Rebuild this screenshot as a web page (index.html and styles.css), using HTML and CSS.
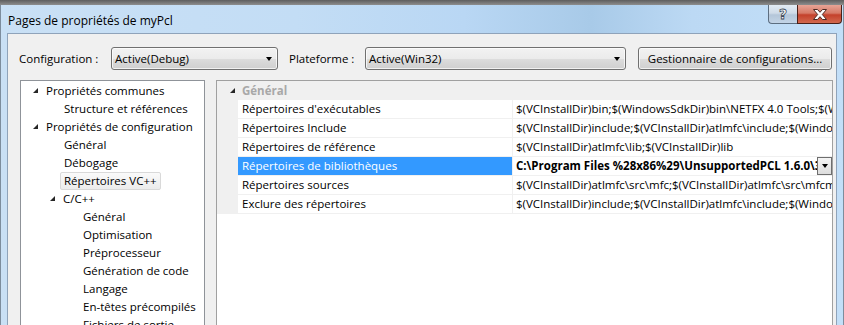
FILE: index.html
```html
<!DOCTYPE html>
<html lang="fr">
<head>
<meta charset="utf-8">
<title>Pages de propriétés de myPcl</title>
<link rel="stylesheet" href="styles.css">
</head>
<body>
<div class="window">
  <div class="topedge"></div>
  <div class="titlebar">
    <span class="title">Pages de propriétés de myPcl</span>
    <div class="caption-btns">
      <div class="cbtn help"><span class="q">?</span></div>
      <div class="cbtn close">
        <svg width="18" height="13" viewBox="0 0 18 13"><path d="M2.5 1.5 H6.5 L9 4.3 L11.5 1.5 H15.5 L11.3 6.5 L15.5 11.5 H11.5 L9 8.7 L6.5 11.5 H2.5 L6.7 6.5 Z" fill="#fff" stroke="#4b2a24" stroke-width="1" stroke-linejoin="round"/></svg>
      </div>
    </div>
  </div>
  <div class="client">
    <div class="toolbar">
      <span class="label lbl-config">Configuration :</span>
      <div class="combo combo-config"><span class="combo-text">Active(Debug)</span><span class="arrow"></span></div>
      <span class="label lbl-plat">Plateforme :</span>
      <div class="combo combo-plat"><span class="combo-text">Active(Win32)</span><span class="arrow"></span></div>
      <div class="button">Gestionnaire de configurations...</div>
    </div>
    <div class="panels">
      <div class="tree">
        <div class="node l0"><span class="tri"></span><span class="txt">Propriétés communes</span></div>
        <div class="node l1"><span class="txt">Structure et références</span></div>
        <div class="node l0"><span class="tri"></span><span class="txt">Propriétés de configuration</span></div>
        <div class="node l1"><span class="txt">Général</span></div>
        <div class="node l1"><span class="txt">Débogage</span></div>
        <div class="node l1 sel"><span class="txt">Répertoires VC++</span></div>
        <div class="node l1x"><span class="tri"></span><span class="txt">C/C++</span></div>
        <div class="node l2"><span class="txt">Général</span></div>
        <div class="node l2"><span class="txt">Optimisation</span></div>
        <div class="node l2"><span class="txt">Préprocesseur</span></div>
        <div class="node l2"><span class="txt">Génération de code</span></div>
        <div class="node l2"><span class="txt">Langage</span></div>
        <div class="node l2"><span class="txt">En-têtes précompilés</span></div>
        <div class="node l2"><span class="txt">Fichiers de sortie</span></div>
      </div>
      <div class="grid">
        <div class="cat"><span class="cat-tri"><span class="tri"></span></span><span class="cat-txt">Général</span></div>
        <div class="prow"><span class="margin"></span><span class="name">Répertoires d'exécutables</span><span class="value">$(VCInstallDir)bin;$(WindowsSdkDir)bin\NETFX 4.0 Tools;$(WindowsSdkDir)bin;$(VSInstallDir)Common7\Tools\bin</span></div>
        <div class="prow"><span class="margin"></span><span class="name">Répertoires Include</span><span class="value">$(VCInstallDir)include;$(VCInstallDir)atlmfc\include;$(WindowsSdkDir)include;$(FrameworkSDKDir)\include</span></div>
        <div class="prow"><span class="margin"></span><span class="name">Répertoires de référence</span><span class="value">$(VCInstallDir)atlmfc\lib;$(VCInstallDir)lib</span></div>
        <div class="prow selrow"><span class="margin"></span><span class="name">Répertoires de bibliothèques</span><span class="value"><span class="vtext">C:\Program Files %28x86%29\UnsupportedPCL 1.6.0\3rdParty\lib;$(LibraryPath)</span><span class="dd"><span class="ddarrow"></span></span></span></div>
        <div class="prow"><span class="margin"></span><span class="name">Répertoires sources</span><span class="value">$(VCInstallDir)atlmfc\src\mfc;$(VCInstallDir)atlmfc\src\mfcm;$(VCInstallDir)atlmfc\src\atl</span></div>
        <div class="prow"><span class="margin"></span><span class="name">Exclure des répertoires</span><span class="value">$(VCInstallDir)include;$(VCInstallDir)atlmfc\include;$(WindowsSdkDir)include;$(FrameworkSDKDir)\include</span></div>
      </div>
    </div>
  </div>
</div>
</body>
</html>
```
FILE: styles.css
```css
html, body {
  margin: 0;
  padding: 0;
}
body {
  width: 844px;
  height: 325px;
  overflow: hidden;
  font-family: "Open Sans", "Noto Sans", sans-serif;
  font-size: 11.5px;
  color: #000;
}
.window {
  width: 844px;
  height: 325px;
  overflow: hidden;
  display: flex;
  flex-direction: column;
  background: linear-gradient(90deg, #c9e0f5 0%, #c3ddf5 35%, #b9d7f4 55%, #a8cae8 70%, #bcd9f4 82%, #c3dff8 100%);
  box-shadow: inset 1px 0 0 #7d8d9d, inset -1px 0 0 #7d8d9d;
}
.topedge {
  height: 5px;
  flex: none;
  background: linear-gradient(180deg, #5e5e5e, #8d8d8d);
}
.titlebar {
  height: 28px;
  flex: none;
  display: flex;
  align-items: flex-start;
  padding-left: 8px;
}
.title {
  font-size: 12px;
  line-height: 16px;
  margin-top: 8px;
  color: #000;
}
.caption-btns {
  margin-left: auto;
  margin-right: 2px;
  display: flex;
  height: 19px;
}
.cbtn {
  height: 19px;
  box-sizing: border-box;
  display: flex;
  align-items: center;
  justify-content: center;
}
.help {
  width: 29px;
  border: 1px solid #5d6e80;
  border-top: none;
  border-right: none;
  border-radius: 0 0 0 4px;
  background: linear-gradient(180deg, #e2ebf4 0%, #cfdbe8 45%, #b4c6d9 55%, #c3d4e6 100%);
}
.q {
  font-family: "DejaVu Sans", sans-serif;
  font-weight: bold;
  font-size: 14px;
  line-height: 16px;
  color: #fff;
  -webkit-text-stroke: 0.8px #3e4a58;
}
.close {
  width: 45px;
  border: 1px solid #4a2019;
  border-top: none;
  border-radius: 0 0 4px 0;
  background: linear-gradient(180deg, #e7a496 0%, #d67a67 45%, #c4412b 55%, #d2694f 100%);
}
.client {
  flex: 1;
  margin: 0 7px 0 7px;
  border-top: 1px solid #8fa3ba;
  border-left: 1px solid #8fa3ba;
  border-right: 1px solid #8fa3ba;
  background: #f0f0f0;
  display: flex;
  flex-direction: column;
}
.toolbar {
  display: flex;
  align-items: center;
  height: 23px;
  margin-top: 13px;
  padding-left: 11px;
}
.label {
  flex: none;
  line-height: 23px;
}
.lbl-config { width: 92px; }
.lbl-plat { width: 76px; margin-left: 11px; }
.combo, .button {
  box-sizing: border-box;
  height: 23px;
  border: 1px solid #707070;
  border-radius: 3px;
  background: linear-gradient(180deg, #f2f2f2 0%, #ebebeb 50%, #dddddd 50%, #cfcfcf 100%);
  box-shadow: inset 0 0 0 1px rgba(255,255,255,0.7);
  display: flex;
  align-items: center;
  flex: none;
}
.combo-config { width: 167px; }
.combo-plat { width: 261px; }
.combo-text {
  padding-left: 3px;
  flex: 1;
}
.arrow {
  width: 0;
  height: 0;
  border-left: 3.5px solid transparent;
  border-right: 3.5px solid transparent;
  border-top: 4px solid #000;
  margin-right: 5px;
}
.button {
  width: 194px;
  margin-left: 12px;
  justify-content: center;
}
.panels {
  display: flex;
  margin-top: 10px;
  padding-left: 11px;
}
.tree {
  flex: none;
  box-sizing: border-box;
  width: 185px;
  height: 260px;
  margin-left: 1px;
  border: 1px solid #8f9399;
  background: #fff;
  padding-top: 1px;
}
.node {
  height: 18px;
  display: flex;
  align-items: center;
  white-space: nowrap;
}
.node .txt {
  line-height: 16px;
  padding: 0 3px;
  border: 1px solid transparent;
  border-radius: 2px;
}
.l0 { padding-left: 12px; }
.l1 { padding-left: 39px; }
.l1x { padding-left: 29px; }
.l2 { padding-left: 58px; }
.tri {
  display: inline-block;
  width: 0;
  height: 0;
  border-left: 5px solid transparent;
  border-bottom: 5px solid #262626;
  margin-right: 4px;
  margin-top: -1px;
}
.node.sel .txt {
  border-color: #d9d9d9;
  background: linear-gradient(180deg, #fafafa, #ececec);
}
.grid {
  flex: none;
  box-sizing: border-box;
  width: 617px;
  height: 260px;
  margin-left: 11px;
  border: 1px solid #a0a0a0;
  background: #fff;
}
.cat {
  height: 19px;
  background: #f0f0f0;
  display: flex;
  align-items: center;
}
.cat-tri {
  width: 21px;
  display: flex;
  justify-content: flex-end;
  padding-right: 3px;
  box-sizing: border-box;
}
.cat-tri .tri { margin: 0; }
.cat-txt {
  padding-left: 4px;
  font-weight: bold;
  color: #a8a8a8;
}
.prow {
  height: 18px;
  border-bottom: 1px solid #f0f0f0;
  display: flex;
  white-space: nowrap;
}
.margin {
  width: 21px;
  flex: none;
  background: #f0f0f0;
}
.name {
  width: 275px;
  flex: none;
  box-sizing: border-box;
  padding-left: 4px;
  line-height: 18px;
  border-right: 1px solid #f0f0f0;
  overflow: hidden;
}
.value {
  flex: 1;
  min-width: 0;
  padding-left: 3px;
  line-height: 18px;
  overflow: hidden;
  display: flex;
}
.selrow .name {
  background: #3399ff;
  color: #fff;
}
.selrow .value {
  font-weight: bold;
}
.vtext {
  flex: 1;
  min-width: 0;
  overflow: hidden;
}
.dd {
  flex: none;
  width: 15px;
  height: 18px;
  box-sizing: border-box;
  border: 1px solid #6e6e6e;
  background: linear-gradient(180deg, #f4f4f4, #dcdcdc);
  display: flex;
  align-items: center;
  justify-content: center;
}
.ddarrow {
  width: 0;
  height: 0;
  border-left: 3.5px solid transparent;
  border-right: 3.5px solid transparent;
  border-top: 4px solid #000;
}
```
